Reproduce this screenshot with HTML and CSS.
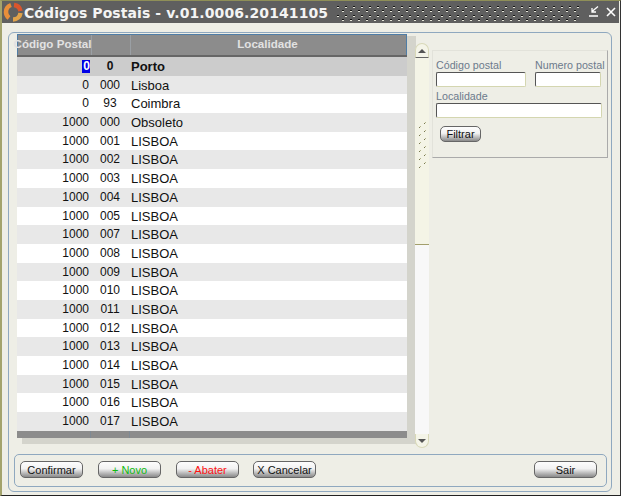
FILE: index.html
```html
<!DOCTYPE html>
<html lang="pt">
<head>
    <meta charset="UTF-8">
    <title>Códigos Postais</title>
    <link rel="stylesheet" href="styles.css">
</head>
<body>

<div class="window">
    <!-- Title bar -->
    <div class="titlebar">
        <svg class="logo" width="20" height="20" viewBox="0 0 20 20">
            <g fill="none" stroke-width="4.5">
                <path d="M11 3 A7.5 7.5 0 0 1 17.5 9" stroke="#d9552c"/>
                <path d="M8 3 A7.5 7.5 0 0 0 3 10 A7.5 7.5 0 0 0 6 16" stroke="#e88f3a"/>
                <path d="M17.5 11 A7.5 7.5 0 0 1 10 17.5" stroke="#e0a24a"/>
            </g>
        </svg>
        <span class="title">Códigos Postais - v.01.0006.20141105</span>
        <svg class="dither" width="245" height="16">
            <defs>
                <pattern id="dots" width="8" height="9" patternUnits="userSpaceOnUse">
                    <rect x="0" y="1" width="2" height="1" fill="#111"/>
                    <rect x="0" y="2" width="2" height="1" fill="#e4e4d8"/>
                    <rect x="5" y="5" width="2" height="1" fill="#111"/>
                    <rect x="5" y="6" width="2" height="1" fill="#e4e4d8"/>
                </pattern>
            </defs>
            <rect width="245" height="16" fill="url(#dots)"/>
        </svg>
        <svg class="win-btn" width="12" height="12" viewBox="0 0 12 12">
            <path d="M9 0.5 L3 5.5 M3 2 V6 H7 M0 10 H9" fill="none" stroke="#fff" stroke-width="1.3"/>
        </svg>
        <svg class="win-btn win-close" width="10" height="10" viewBox="0 0 10 10">
            <path d="M1 1 L9 9 M9 1 L1 9" fill="none" stroke="#fff" stroke-width="1.6"/>
        </svg>
    </div>

    <div class="panel">
        <div class="main">
            <!-- Grid of postal codes -->
            <div class="grid">
                <div class="grid-head">
                    <div class="head-cell head-code">Código Postal</div>
                    <div class="head-cell"></div>
                    <div class="head-cell head-local">Localidade</div>
                </div>
                <div class="grid-body">
                    <div class="row row-current"><div class="c1"><span class="sel">0</span></div><div class="c2">0</div><div class="c3">Porto</div></div>
                    <div class="row"><div class="c1">0</div><div class="c2">000</div><div class="c3">Lisboa</div></div>
                    <div class="row"><div class="c1">0</div><div class="c2">93</div><div class="c3">Coimbra</div></div>
                    <div class="row"><div class="c1">1000</div><div class="c2">000</div><div class="c3">Obsoleto</div></div>
                    <div class="row"><div class="c1">1000</div><div class="c2">001</div><div class="c3">LISBOA</div></div>
                    <div class="row"><div class="c1">1000</div><div class="c2">002</div><div class="c3">LISBOA</div></div>
                    <div class="row"><div class="c1">1000</div><div class="c2">003</div><div class="c3">LISBOA</div></div>
                    <div class="row"><div class="c1">1000</div><div class="c2">004</div><div class="c3">LISBOA</div></div>
                    <div class="row"><div class="c1">1000</div><div class="c2">005</div><div class="c3">LISBOA</div></div>
                    <div class="row"><div class="c1">1000</div><div class="c2">007</div><div class="c3">LISBOA</div></div>
                    <div class="row"><div class="c1">1000</div><div class="c2">008</div><div class="c3">LISBOA</div></div>
                    <div class="row"><div class="c1">1000</div><div class="c2">009</div><div class="c3">LISBOA</div></div>
                    <div class="row"><div class="c1">1000</div><div class="c2">010</div><div class="c3">LISBOA</div></div>
                    <div class="row"><div class="c1">1000</div><div class="c2">011</div><div class="c3">LISBOA</div></div>
                    <div class="row"><div class="c1">1000</div><div class="c2">012</div><div class="c3">LISBOA</div></div>
                    <div class="row"><div class="c1">1000</div><div class="c2">013</div><div class="c3">LISBOA</div></div>
                    <div class="row"><div class="c1">1000</div><div class="c2">014</div><div class="c3">LISBOA</div></div>
                    <div class="row"><div class="c1">1000</div><div class="c2">015</div><div class="c3">LISBOA</div></div>
                    <div class="row"><div class="c1">1000</div><div class="c2">016</div><div class="c3">LISBOA</div></div>
                    <div class="row"><div class="c1">1000</div><div class="c2">017</div><div class="c3">LISBOA</div></div>
                </div>
                <div class="grid-foot">
                    <div class="foot-cell"></div>
                    <div class="foot-cell"></div>
                    <div class="foot-cell"></div>
                </div>
            </div>

            <!-- Scrollbar -->
            <div class="scrollbar">
                <div class="scroll-btn scroll-up"><span class="arrow-up"></span></div>
                <div class="scroll-thumb">
                    <svg class="grip" width="8" height="48">
                        <defs>
                            <pattern id="grip" width="8" height="8" patternUnits="userSpaceOnUse">
                                <rect x="5" y="1" width="1" height="1" fill="#77774f"/>
                                <rect x="6" y="0" width="1" height="1" fill="#b5b58c"/>
                                <rect x="0" y="5" width="1" height="1" fill="#77774f"/>
                                <rect x="1" y="4" width="1" height="1" fill="#b5b58c"/>
                            </pattern>
                        </defs>
                        <rect width="8" height="48" fill="url(#grip)"/>
                    </svg>
                </div>
                <div class="scroll-track"></div>
                <div class="scroll-btn scroll-down"><span class="arrow-down"></span></div>
            </div>

            <!-- Filter -->
            <div class="filter">
                <div class="filter-row">
                    <label class="field field-code">Código postal<input type="text"></label>
                    <label class="field field-num">Numero postal<input type="text"></label>
                </div>
                <label class="field field-local">Localidade<input type="text"></label>
                <button class="btn btn-filter">Filtrar</button>
            </div>
        </div>

        <!-- Actions -->
        <div class="actions">
            <button class="btn">Confirmar</button>
            <button class="btn btn-new">+ Novo</button>
            <button class="btn btn-del">- Abater</button>
            <button class="btn btn-cancel">X Cancelar</button>
            <button class="btn btn-exit">Sair</button>
        </div>
    </div>
</div>

</body>
</html>
```

FILE: styles.css
```css
body {
    margin: 0;
    padding: 0;
    font-family: "Liberation Sans", Arial, sans-serif;
    font-size: 12px;
    color: #111;
    background-color: #ededE5;
}
.window {
    width: 621px;
    height: 496px;
    box-sizing: border-box;
    display: flex;
    flex-direction: column;
    overflow: hidden;
    background-color: #eeeee6;
    border-left: 2px solid #a3a36c;
    border-right: 1px solid #333;
    border-bottom: 1px solid #222;
    border-top: 1px solid #8f8f58;
}
.titlebar {
    display: flex;
    align-items: center;
    height: 22px;
    flex-shrink: 0;
    background-color: #5f5f5f;
    margin-right: 1px;
    padding-left: 1px;
}
.logo {
    flex-shrink: 0;
}
.title {
    margin-left: 1px;
    padding-top: 1px;
    width: 313px;
    flex-shrink: 0;
    font-family: "DejaVu Sans", Verdana, sans-serif;
    font-weight: bold;
    font-size: 14px;
    letter-spacing: 0.09px;
    color: #f4f4f4;
    white-space: nowrap;
}
.dither {
    flex-shrink: 0;
    margin-top: 2px;
}
.win-btn {
    flex-shrink: 0;
    margin-left: 7px;
}
.win-close {
    margin-left: 5px;
}
.panel {
    flex: 1;
    display: flex;
    flex-direction: column;
    margin: 9px 8px 3px 6px;
    border: 1px solid #8fa8bf;
    border-radius: 6px;
}
.main {
    display: flex;
    align-items: flex-start;
    padding-top: 1px;
    padding-left: 8px;
}
.grid {
    width: 390px;
    flex-shrink: 0;
    box-shadow: 7px 4px 0 2px #d4d4cc;
}
.grid-head {
    display: grid;
    grid-template-columns: 74px 39px 1fr;
    height: 21px;
    box-sizing: border-box;
    background-color: #8c8c8c;
    border: 1px solid #4f7da6;
    border-bottom: 0;
}
.head-cell {
    display: flex;
    justify-content: center;
    align-items: center;
    white-space: nowrap;
    font-weight: bold;
    font-size: 11.6px;
    color: #e2e2e2;
    border-right: 1px solid #9a9fa4;
    padding-bottom: 3px;
    box-sizing: border-box;
}
.head-cell:last-child {
    border-right: 0;
}
.head-code {
    padding-right: 4px;
}
.head-local {
    padding-right: 2px;
}
.grid-body {
    border-top: 2px solid #666;
}
.row {
    display: grid;
    grid-template-columns: 73px 40px 1fr;
    height: 18.7px;
    line-height: 19px;
    background-color: #fff;
}
.row:nth-child(even) {
    background-color: #e8e8e8;
}
.row-current {
    background-color: #cccccc;
    font-weight: bold;
}
.c1 {
    text-align: right;
    padding-right: 1px;
}
.c2 {
    text-align: center;
}
.c3 {
    padding-left: 1px;
    font-size: 13px;
}
.sel {
    display: inline-block;
    background-color: #0000e6;
    color: #fff;
    padding: 0 0 0 1px;
    margin-right: -1px;
    line-height: 13px;
}
.grid-foot {
    display: grid;
    grid-template-columns: 74px 39px 1fr;
    height: 7px;
    background-color: #8c8c8c;
}
.foot-cell {
    border-right: 1px solid #7f8a94;
}
.foot-cell:last-child {
    border-right: 0;
}
.scrollbar {
    width: 14px;
    height: 405px;
    flex-shrink: 0;
    margin: 9px 0 0 8px;
    display: flex;
    flex-direction: column;
}
.scroll-btn {
    height: 14px;
    box-sizing: border-box;
    display: flex;
    justify-content: center;
    align-items: center;
    background-color: #f4f4e8;
    border: 1px solid #d8d8b8;
}
.scroll-up {
    height: 15px;
    border-bottom: 1px solid #666;
    border-radius: 7px 7px 0 0;
}
.scroll-down {
    border-top: 0;
    border-radius: 0 0 7px 7px;
}
.arrow-up {
    width: 0;
    height: 0;
    border-left: 4px solid transparent;
    border-right: 4px solid transparent;
    border-bottom: 4px solid #555;
}
.arrow-down {
    width: 0;
    height: 0;
    border-left: 4px solid transparent;
    border-right: 4px solid transparent;
    border-top: 4px solid #555;
}
.scroll-thumb {
    height: 187px;
    box-sizing: border-box;
    padding: 64px 0 0 4px;
    background-color: #f4f4e6;
    border-bottom: 1px solid #a39f6c;
}
.grip {
    display: block;
}
.scroll-track {
    flex: 1;
    background-color: #f8f8f8;
}
.filter {
    width: 176px;
    height: 108px;
    box-sizing: border-box;
    flex-shrink: 0;
    margin: 16px 0 0 3px;
    padding: 8px 0 0 3px;
    border-right: 1px solid #aaa;
    border-bottom: 1px solid #aaa;
    border-top: 1px solid #e2e2da;
    border-left: 1px solid #e2e2da;
    display: flex;
    flex-direction: column;
    align-items: flex-start;
}
.filter-row {
    display: flex;
    gap: 9px;
}
.field {
    display: flex;
    flex-direction: column;
    font-size: 10.7px;
    line-height: 13px;
    color: #6c7a8c;
    white-space: nowrap;
}
.field input {
    height: 15px;
    box-sizing: border-box;
    margin: 0;
    padding: 0;
    background-color: #fff;
    border: 1px solid #d4d6b0;
    border-top-color: #555;
    border-left-color: #555;
    border-radius: 2px;
}
.field-code input {
    width: 90px;
}
.field-num input {
    width: 66px;
}
.field-local {
    margin-top: 3px;
}
.field-local input {
    width: 166px;
}
.btn {
    height: 17px;
    width: 63px;
    box-sizing: border-box;
    padding: 0;
    font-family: "Liberation Sans", Arial, sans-serif;
    font-size: 11px;
    line-height: 14px;
    color: #111;
    white-space: nowrap;
    border: 1px solid #666;
    border-radius: 5px;
    background-image: linear-gradient(#fdfdfd 0%, #f2f2f2 45%, #b8b8b8 75%, #8a8a8a 100%);
}
.btn-filter {
    width: 41px;
    height: 16px;
    margin: 8px 0 0 4px;
}
.actions {
    display: flex;
    gap: 15px;
    align-items: center;
    margin: auto 4px 4px 5px;
    height: 33px;
    box-sizing: border-box;
    padding: 0 9px 2px 5px;
    border: 1px solid #8fa8bf;
    border-radius: 5px;
}
.btn-new {
    color: #11bb11;
}
.btn-del {
    color: #ff1111;
}
.btn-cancel {
    margin-left: -1px;
}
.btn-exit {
    margin-left: auto;
}
```
